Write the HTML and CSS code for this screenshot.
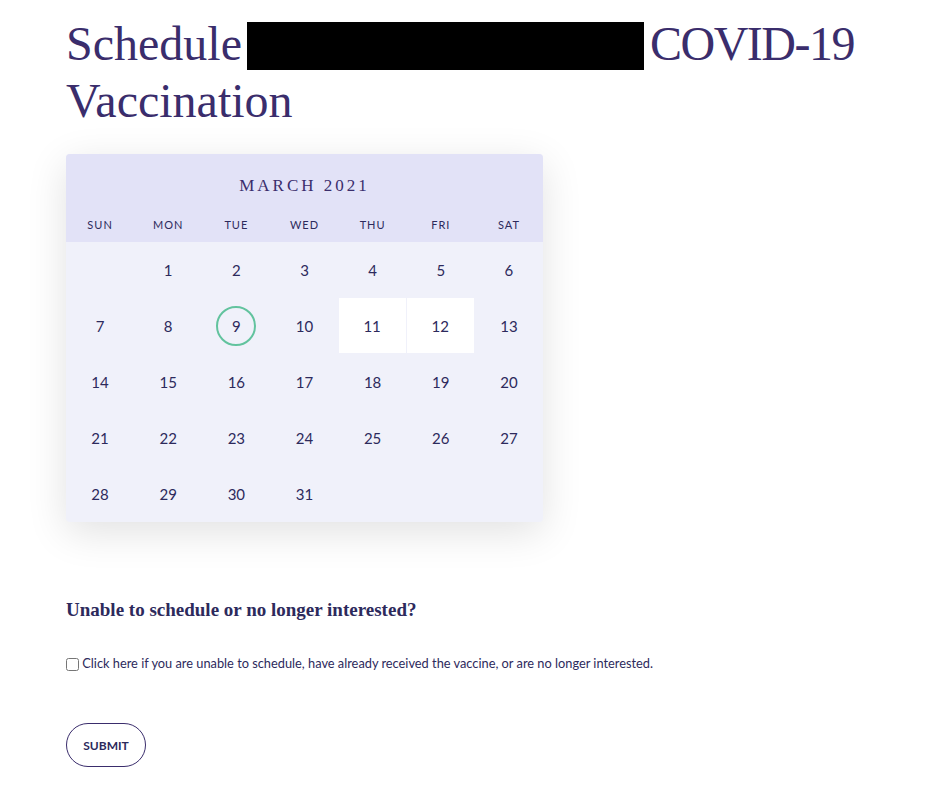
FILE: index.html
```html
<!DOCTYPE html>
<html lang="en">
<head>
    <meta charset="UTF-8">
    <meta name="viewport" content="width=device-width, initial-scale=1.0">
    <title>Schedule COVID-19 Vaccination</title>
    <link rel="stylesheet" href="styles.css">
</head>
<body>
    <div class="container">
        <h1>Schedule<span class="redacted"></span><span class="nowrap">COVID-19</span> Vaccination</h1>

        <div class="calendar">
            <div class="cal-head">
                <div class="month">MARCH 2021</div>
                <div class="weekdays">
                    <span>SUN</span><span>MON</span><span>TUE</span><span>WED</span><span>THU</span><span>FRI</span><span>SAT</span>
                </div>
            </div>
            <div class="days">
                <span></span><span>1</span><span>2</span><span>3</span><span>4</span><span>5</span><span>6</span>
                <span>7</span><span>8</span><span class="today">9</span><span>10</span><span class="open">11</span><span class="open">12</span><span>13</span>
                <span>14</span><span>15</span><span>16</span><span>17</span><span>18</span><span>19</span><span>20</span>
                <span>21</span><span>22</span><span>23</span><span>24</span><span>25</span><span>26</span><span>27</span>
                <span>28</span><span>29</span><span>30</span><span>31</span><span></span><span></span><span></span>
            </div>
        </div>

        <h3>Unable to schedule or no longer interested?</h3>
        <label class="optout">
            <input type="checkbox">
            Click here if you are unable to schedule, have already received the vaccine, or are no longer interested.
        </label>

        <button class="submit">SUBMIT</button>
    </div>
</body>
</html>
```

FILE: styles.css
```css
body {
    margin: 0;
    font-family: Lato, "Open Sans", sans-serif;
    color: #2d2a5c;
    background: #fff;
}
.container {
    padding: 0 0 0 66px;
}
h1 {
    font-family: "Liberation Serif", serif;
    font-weight: normal;
    font-size: 48px;
    line-height: 57px;
    color: #3a2d6c;
    margin: 15px 0 0;
    width: 820px;
}
.nowrap {
    white-space: nowrap;
    letter-spacing: -1.5px;
}
.redacted {
    display: inline-block;
    width: 397px;
    height: 48px;
    margin: 0 6px 0 5px;
    background: #000;
    vertical-align: -10px;
}
.calendar {
    width: 477px;
    margin-top: 25px;
    border-radius: 4px;
    overflow: hidden;
    background: #f0f1fa;
    box-shadow: 0 10px 40px rgba(0, 0, 0, 0.12);
}
.cal-head {
    background: #e2e2f7;
    height: 88px;
}
.month {
    font-family: "Liberation Serif", serif;
    font-size: 17px;
    letter-spacing: 3px;
    text-align: center;
    padding-top: 22px;
    color: #3a2d6c;
}
.weekdays {
    display: grid;
    grid-template-columns: repeat(7, 1fr);
    margin-top: 22px;
    font-size: 11px;
    letter-spacing: 1px;
    text-align: center;
}
.days {
    display: grid;
    grid-template-columns: repeat(7, 1fr);
    grid-auto-rows: 56px;
}
.days span {
    display: flex;
    align-items: center;
    justify-content: center;
    font-size: 15px;
}
.days .open {
    background: #fff;
    margin: 0 1px 1px 0;
}
.days .today {
    position: relative;
}
.days .today::after {
    content: "";
    position: absolute;
    width: 36px;
    height: 36px;
    border: 2px solid #62c39e;
    border-radius: 50%;
    top: 8px;
    left: 14px;
}
h3 {
    font-family: "Liberation Serif", serif;
    font-size: 19px;
    color: #2d2a5c;
    margin: 77px 0 0;
}
.optout {
    display: block;
    font-size: 12.8px;
    margin-top: 34px;
}
.optout input {
    margin: 0;
    width: 13px;
    height: 13px;
    vertical-align: -3px;
}
.submit {
    display: block;
    margin-top: 52px;
    width: 80px;
    height: 44px;
    border: 1px solid #3a2d6c;
    border-radius: 22px;
    background: #fff;
    color: #2d2a5c;
    font-family: Lato, sans-serif;
    font-weight: bold;
    font-size: 12px;
    cursor: pointer;
}
```
